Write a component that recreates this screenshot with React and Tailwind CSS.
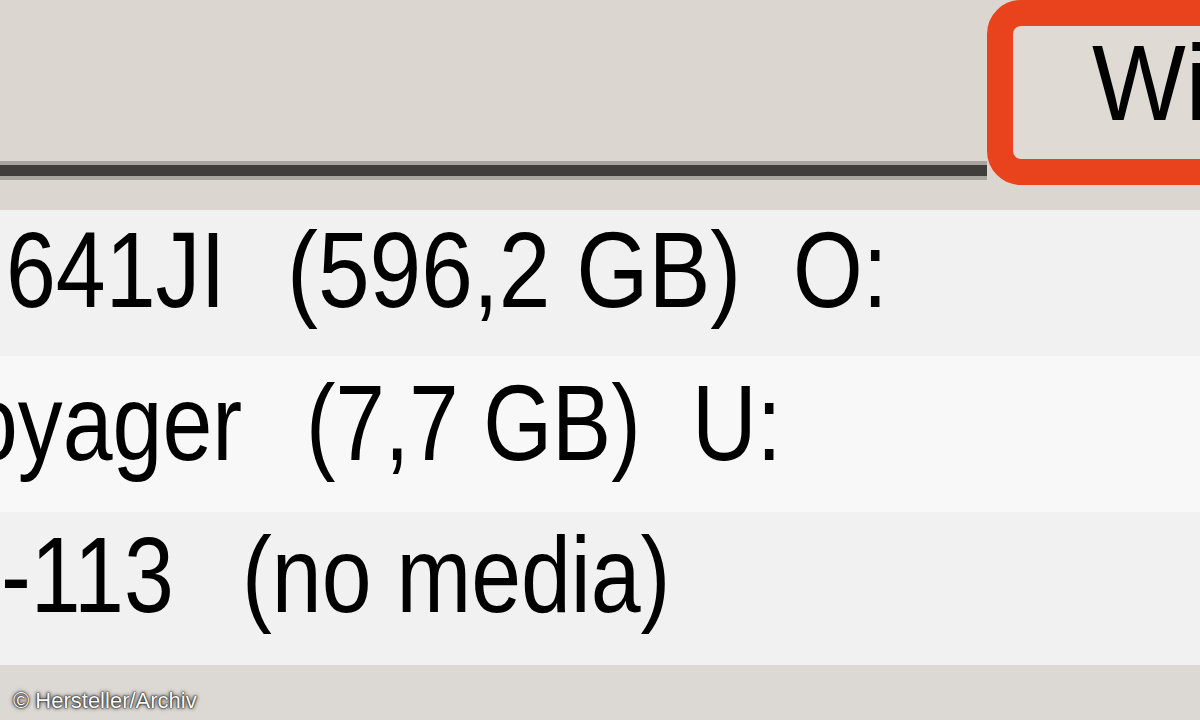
import React from "react";

const rows = [
  {
    bg: "bg-[#f1f1f1]",
    height: "h-[146px] pt-[6px]",
    cells: [
      { text: "641JI", box: "ml-[6px] w-[281px]", scale: "scale-x-[0.83]" },
      { text: "(596,2 GB)", box: "w-[506px]", scale: "scale-x-[0.86]" },
      { text: "O:", box: "w-[200px]", scale: "scale-x-[0.83]" },
    ],
  },
  {
    bg: "bg-[#f8f8f8]",
    height: "h-[156px] pt-[13px]",
    cells: [
      { text: "oyager", box: "ml-[-32px] w-[338px]", scale: "scale-x-[0.83]" },
      { text: "(7,7 GB)", box: "w-[386px]", scale: "scale-x-[0.82]" },
      { text: "U:", box: "w-[200px]", scale: "scale-x-[0.83]" },
    ],
  },
  {
    bg: "bg-[#f1f1f1]",
    height: "h-[153px] pt-[9px]",
    cells: [
      { text: "-113", box: "ml-[1px] w-[241px]", scale: "scale-x-[0.83]" },
      { text: "(no media)", box: "w-[600px]", scale: "scale-x-[0.83]" },
    ],
  },
];

const DriveRow = ({ row }) => (
  <div className={`flex items-start ${row.bg} ${row.height}`}>
    {row.cells.map((cell) => (
      <div key={cell.text} className={`shrink-0 ${cell.box}`}>
        <span className={`inline-block origin-left ${cell.scale} whitespace-nowrap text-[108px] leading-none text-black`}>
          {cell.text}
        </span>
      </div>
    ))}
  </div>
);

export default function App() {
  return (
    <div className="w-[1200px] h-[720px] overflow-hidden flex flex-col bg-[#dcd6d0] font-['Liberation_Sans',Arial,sans-serif]">
      {/* toolbar strip with tab line and highlighted button */}
      <div className="flex h-[210px] shrink-0">
        <div className="w-[987px] shrink-0 flex flex-col">
          <div className="h-[161px]" />
          <div className="h-[4px] bg-[#a9a6a2]" />
          <div className="h-[11px] bg-[#3f3e3c]" />
          <div className="h-[4px] bg-[#a8a5a1]" />
        </div>
        <div className="w-[300px] shrink-0">
          <div className="h-[185px] border-[26px] border-[#e8431d] rounded-[34px] bg-[#dfdad4] overflow-hidden pl-[79px] pt-[3px]">
            <span className="inline-block origin-left scale-x-[0.92] whitespace-nowrap text-[108px] leading-none text-black">
              Wiederherstellen
            </span>
          </div>
        </div>
      </div>

      {/* drive list */}
      <div className="flex flex-col">
        {rows.map((row, i) => (
          <DriveRow key={i} row={row} />
        ))}
      </div>

      {/* bottom bar with credit */}
      <div className="flex-1 bg-[#dcd8d3] flex items-end pl-[13px] pb-[8px]">
        <span className="text-[22px] leading-none text-white [text-shadow:0_0_4px_#111,0_0_2px_#111,0_0_1px_#000]">
          © Hersteller/Archiv
        </span>
      </div>
    </div>
  );
}
